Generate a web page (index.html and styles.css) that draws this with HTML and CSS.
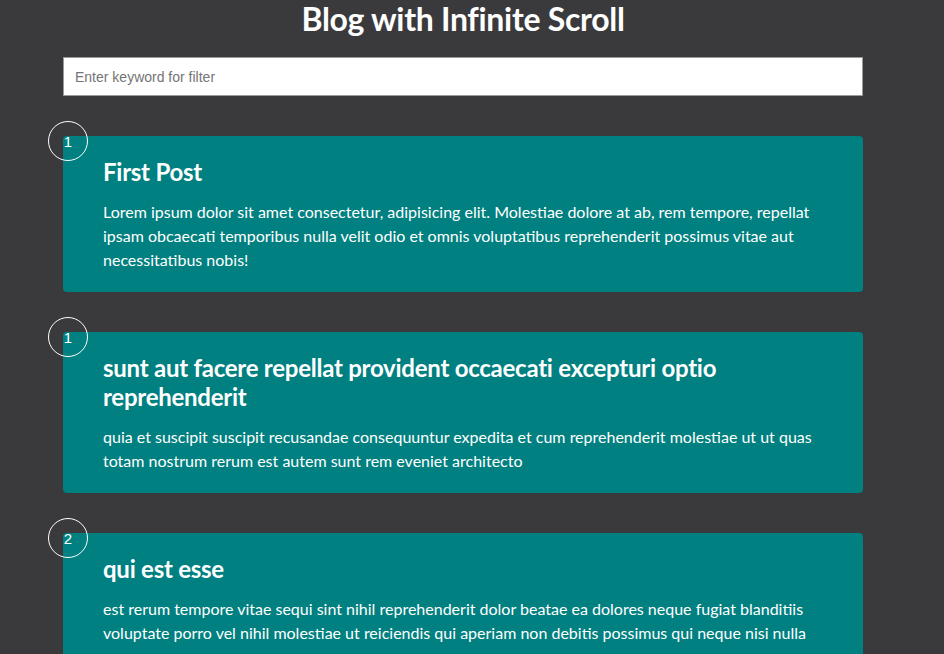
FILE: index.html
```html
<!DOCTYPE html>
<html lang="en">
<head>
<meta charset="UTF-8">
<title>Blog with Infinite Scroll</title>
<link rel="stylesheet" href="styles.css">
</head>
<body>
  <main class="page">
    <h1 class="page-title">Blog with Infinite Scroll</h1>
    <div class="filter">
      <input type="text" class="filter-input" placeholder="Enter keyword for filter">
    </div>
    <div class="posts">
      <article class="post">
        <div class="post-number">1</div>
        <h2 class="post-title">First Post</h2>
        <p class="post-body">Lorem ipsum dolor sit amet consectetur, adipisicing elit. Molestiae dolore at ab, rem tempore, repellat ipsam obcaecati temporibus nulla velit odio et omnis voluptatibus reprehenderit possimus vitae aut necessitatibus nobis!</p>
      </article>
      <article class="post">
        <div class="post-number">1</div>
        <h2 class="post-title">sunt aut facere repellat provident occaecati excepturi optio reprehenderit</h2>
        <p class="post-body">quia et suscipit suscipit recusandae consequuntur expedita et cum reprehenderit molestiae ut ut quas totam nostrum rerum est autem sunt rem eveniet architecto</p>
      </article>
      <article class="post">
        <div class="post-number">2</div>
        <h2 class="post-title">qui est esse</h2>
        <p class="post-body">est rerum tempore vitae sequi sint nihil reprehenderit dolor beatae ea dolores neque fugiat blanditiis voluptate porro vel nihil molestiae ut reiciendis qui aperiam non debitis possimus qui neque nisi nulla</p>
      </article>
    </div>
  </main>
</body>
</html>
```

FILE: styles.css
```css
* {
  box-sizing: border-box;
}

html, body {
  margin: 0;
  padding: 0;
  background: #3a3a3c;
  overflow: hidden;
}

body {
  font-family: Lato, "Open Sans", sans-serif;
  color: #fff;
  height: 654px;
}

.page {
  display: flex;
  flex-direction: column;
  align-items: center;
  padding-right: 18px;
}

.page-title {
  margin: 0;
  font-size: 32px;
  font-weight: 700;
  line-height: 38px;
  letter-spacing: -0.3px;
}

.filter {
  width: 800px;
  margin-top: 19px;
}

.filter-input {
  display: block;
  width: 100%;
  height: 39px;
  padding: 0 11px;
  border: 1px solid #9a9a9a;
  border-radius: 0;
  background: #fff;
  font-family: "Liberation Sans", Arial, sans-serif;
  font-size: 14px;
  color: #333;
  outline: none;
}

.filter-input::placeholder {
  color: #757575;
}

.posts {
  width: 800px;
  margin-top: 40px;
  display: flex;
  flex-direction: column;
  gap: 40px;
}

.post {
  position: relative;
  background: #008080;
  border-radius: 4px;
  padding: 21px 40px 20px;
}

.post-number {
  position: absolute;
  top: -15px;
  left: -15px;
  width: 40px;
  height: 40px;
  border: 1px solid #fff;
  border-radius: 50%;
  display: flex;
  align-items: center;
  justify-content: center;
  font-family: "Liberation Sans", Arial, sans-serif;
  font-size: 15px;
  color: #fff;
}

.post-title {
  margin: 0;
  font-size: 24px;
  font-weight: 700;
  line-height: 29px;
  letter-spacing: -0.25px;
}

.post-body {
  margin: 14px 0 0;
  font-size: 16px;
  line-height: 24px;
}
```
